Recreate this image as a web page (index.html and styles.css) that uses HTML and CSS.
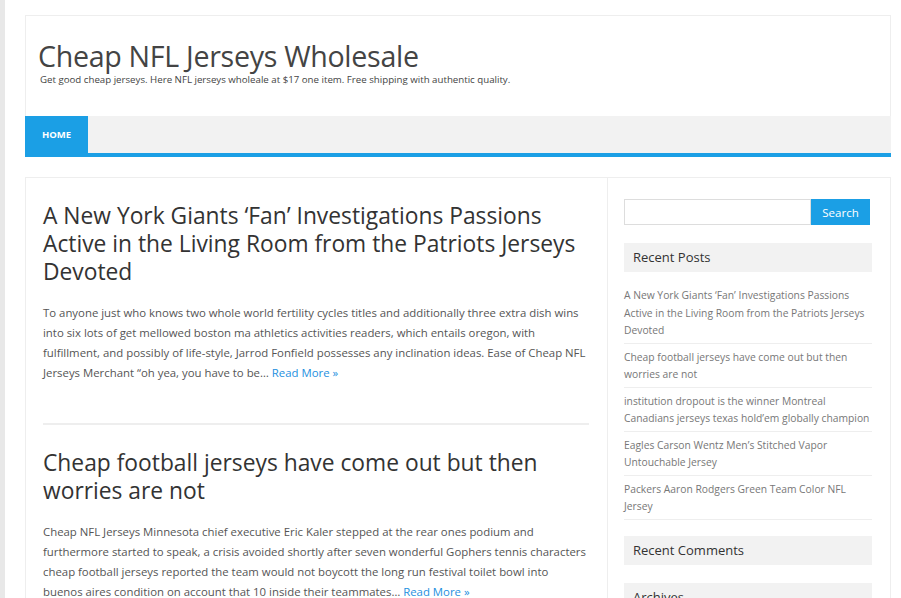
FILE: index.html
```html
<!DOCTYPE html>
<html>
<head>
<meta charset="utf-8">
<link rel="stylesheet" href="styles.css">
</head>
<body>
<div class="page">
  <header class="site-header">
    <div class="branding">
      <h1 class="site-title">Cheap NFL Jerseys Wholesale</h1>
      <p class="tagline">Get good cheap jerseys. Here NFL jerseys wholeale at $17 one item. Free shipping with authentic quality.</p>
    </div>
    <nav class="nav">
      <a class="nav-item active">HOME</a>
    </nav>
  </header>

  <div class="content">
    <main class="main">
      <article class="post">
        <h2 class="post-title">A New York Giants ‘Fan’ Investigations Passions Active in the Living Room from the Patriots Jerseys Devoted</h2>
        <p class="excerpt">To anyone just who knows two whole world fertility cycles titles and additionally three extra dish wins into six lots of get mellowed boston ma athletics activities readers, which entails oregon, with fulfillment, and possibly of life-style, Jarrod Fonfield possesses any inclination ideas. Ease of Cheap NFL Jerseys Merchant “oh yea, you have to be… <a class="more">Read More »</a></p>
      </article>
      <article class="post">
        <h2 class="post-title">Cheap football jerseys have come out but then worries are not</h2>
        <p class="excerpt">Cheap NFL Jerseys Minnesota chief executive Eric Kaler stepped at the rear ones podium and furthermore started to speak, a crisis avoided shortly after seven wonderful Gophers tennis characters cheap football jerseys reported the team would not boycott the long run festival toilet bowl into buenos aires condition on account that 10 inside their teammates… <a class="more">Read More »</a></p>
      </article>
    </main>
    <aside class="sidebar">
      <form class="search">
        <input class="search-input" type="text">
        <button class="search-btn" type="button">Search</button>
      </form>
      <section class="widget">
        <h3 class="widget-title">Recent Posts</h3>
        <ul class="widget-list">
          <li>A New York Giants ‘Fan’ Investigations Passions Active in the Living Room from the Patriots Jerseys Devoted</li>
          <li>Cheap football jerseys have come out but then worries are not</li>
          <li>institution dropout is the winner Montreal Canadians jerseys texas hold’em globally champion</li>
          <li>Eagles Carson Wentz Men’s Stitched Vapor Untouchable Jersey</li>
          <li>Packers Aaron Rodgers Green Team Color NFL Jersey</li>
        </ul>
      </section>
      <section class="widget">
        <h3 class="widget-title">Recent Comments</h3>
      </section>
      <section class="widget">
        <h3 class="widget-title">Archives</h3>
      </section>
    </aside>
  </div>
</div>
</body>
</html>
```
FILE: styles.css
```css
html, body {
  margin: 0;
  padding: 0;
  height: 100%;
  overflow: hidden;
}
body {
  background: #e8e8e8;
  font-family: "Open Sans", "Noto Sans", sans-serif;
  color: #555;
}
.page {
  margin-left: 5px;
  background: #fff;
  min-height: 100%;
  padding: 15px 10px 0 20px;
  box-sizing: border-box;
}
.site-header {
  border: 1px solid #eee;
  border-bottom: none;
  width: 866px;
  box-sizing: border-box;
}
.branding {
  height: 100px;
  padding: 21px 0 0 12px;
  box-sizing: border-box;
}
.site-title {
  margin: 0;
  font-weight: 400;
  font-size: 28.6px;
  line-height: 37px;
  color: #444;
  letter-spacing: -0.3px;
}
.tagline {
  margin: 0 0 0 2px;
  font-size: 9.7px;
  line-height: 12px;
  color: #444;
}
.nav {
  display: flex;
  background: #f2f2f2;
  height: 37px;
  border-bottom: 4px solid #1b9fe5;
  margin: 0 -1px;
}
.nav-item {
  display: flex;
  align-items: center;
  padding: 0 17px;
  width: 63px;
  box-sizing: border-box;
  background: #1b9fe5;
  color: #fff;
  font-weight: 700;
  font-size: 9.5px;
}
.content {
  margin-top: 20px;
  display: flex;
  border: 1px solid #eee;
  width: 866px;
  box-sizing: border-box;
  height: 600px;
}
.main {
  width: 581px;
  padding: 24px 18px 0 17px;
  box-sizing: border-box;
}
.post {
  padding-bottom: 40px;
  border-bottom: 2px solid #eee;
  margin-bottom: 24px;
}
.post-title {
  margin: 0 0 17px;
  font-weight: 400;
  font-size: 22.8px;
  line-height: 28px;
  color: #333;
}
.excerpt {
  margin: 0;
  font-size: 11.38px;
  line-height: 20px;
  color: #555;
}
.more {
  color: #1e90e0;
}
.sidebar {
  flex: 1;
  border-left: 1px solid #eee;
  padding: 21px 18px 0 16px;
}
.search {
  display: flex;
  margin: 0 2px 18px 0;
}
.search-input {
  flex: 1;
  height: 26px;
  box-sizing: border-box;
  border: 1px solid #ddd;
  margin: 0;
}
.search-btn {
  width: 59px;
  height: 26px;
  border: none;
  background: #1b9fe5;
  color: #fff;
  font-family: inherit;
  font-size: 11.5px;
  margin: 0;
}
.widget {
  margin-bottom: 18px;
}
.widget-title {
  margin: 0;
  background: #f2f2f2;
  height: 29px;
  line-height: 29px;
  padding-left: 9px;
  font-weight: 400;
  font-size: 13px;
  color: #333;
}
.widget-list {
  list-style: none;
  margin: 0 0 -2px;
  padding: 15px 0 0;
}
.widget-list li {
  font-size: 10.3px;
  line-height: 17.5px;
  color: #777;
  padding: 0 0 3px;
  margin-bottom: 5px;
  border-bottom: 1px solid #eee;
}
.widget-list li:last-child {
  margin-bottom: 0;
}
```
